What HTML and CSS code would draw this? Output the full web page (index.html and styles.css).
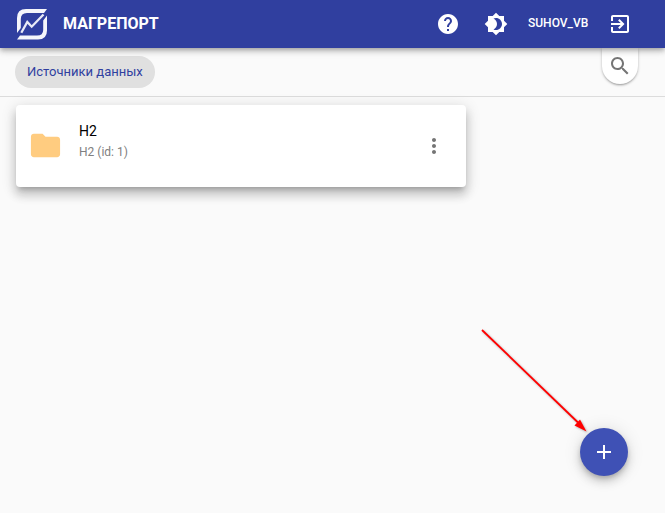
FILE: index.html
```html
<!DOCTYPE html>
<html lang="ru">
<head>
<meta charset="utf-8">
<title>Магрепорт</title>
<link rel="stylesheet" href="styles.css">
</head>
<body>
<header class="appbar">
  <svg class="logo" viewBox="0 0 32 32">
    <path class="frame" d="M31 1H10Q1 1 1 10V25L4.800 20V11Q4.800 5 11 5H28Z"/>
    <path class="frame" d="M1 31.500H22Q31 31.500 31 22.500V7.500L27.200 12.500V22Q27.200 27.500 21 27.500H4Z"/>
    <path class="trend" d="M5.300 24.700L11.300 14L15.700 18.700L27.500 6.500"/>
  </svg>
  <h1 class="brand">МАГРЕПОРТ</h1>
  <nav class="actions">
    <svg class="icon" viewBox="0 0 24 24"><path d="M12 2C6.480 2 2 6.480 2 12s4.480 10 10 10 10-4.480 10-10S17.520 2 12 2zm1 17h-2v-2h2v2zm2.070-7.750l-.9.920C13.450 12.900 13 13.500 13 15h-2v-.5c0-1.100.45-2.100 1.170-2.830l1.240-1.260c.37-.36.59-.86.59-1.410 0-1.100-.9-2-2-2s-2 .9-2 2H8c0-2.210 1.790-4 4-4s4 1.790 4 4c0 .88-.36 1.680-.93 2.250z"/></svg>
    <svg class="icon" viewBox="0 0 24 24"><path d="M20 8.690V4h-4.690L12 .69 8.690 4H4v4.690L.69 12 4 15.310V20h4.690L12 23.310 15.310 20H20v-4.690L23.310 12 20 8.690zM12 18c-.89 0-1.740-.2-2.500-.55C11.560 16.500 13 14.420 13 12s-1.440-4.500-3.500-5.450C10.260 6.200 11.110 6 12 6c3.310 0 6 2.690 6 6s-2.690 6-6 6z"/></svg>
    <span class="user">SUHOV_VB</span>
    <svg class="icon" viewBox="0 0 24 24"><path d="M10.090 15.590L11.500 17l5-5-5-5-1.410 1.410L12.670 11H3v2h9.670l-2.580 2.590zM19 3H5c-1.110 0-2 .9-2 2v4h2V5h14v14H5v-4H3v4c0 1.100.89 2 2 2h14c1.100 0 2-.9 2-2V5c0-1.100-.9-2-2-2z"/></svg>
  </nav>
</header>
<div class="toolbar">
  <span class="chip">Источники данных</span>
  <div class="search">
    <svg class="icon" viewBox="0 0 24 24"><path d="M15.500 14h-.79l-.28-.27C15.410 12.590 16 11.110 16 9.500 16 5.910 13.090 3 9.500 3S3 5.910 3 9.500 5.910 16 9.500 16c1.610 0 3.090-.59 4.230-1.570l.27.28v.79l5 4.990L20.490 19l-4.990-5zm-6 0C7.010 14 5 11.990 5 9.500S7.010 5 9.500 5 14 7.010 14 9.500 11.990 14 9.500 14z"/></svg>
  </div>
</div>
<main class="content">
  <article class="card">
    <svg class="folder" viewBox="0 0 24 24"><path d="M10 4H4c-1.100 0-1.990.9-1.990 2L2 18c0 1.100.9 2 2 2h16c1.100 0 2-.9 2-2V8c0-1.100-.9-2-2-2h-8l-2-2z"/></svg>
    <div class="info">
      <div class="name">H2</div>
      <div class="details">H2 (id: 1)</div>
    </div>
    <svg class="icon more" viewBox="0 0 24 24"><path d="M12 8c1.100 0 2-.9 2-2s-.9-2-2-2-2 .9-2 2 .9 2 2 2zm0 2c-1.100 0-2 .9-2 2s.9 2 2 2 2-.9 2-2-.9-2-2-2zm0 6c-1.100 0-2 .9-2 2s.9 2 2 2 2-.9 2-2-.9-2-2-2z"/></svg>
  </article>
</main>
<button class="fab" aria-label="Добавить"><svg class="icon" viewBox="0 0 24 24"><path d="M19 13h-6v6h-2v-6H5v-2h6V5h2v6h6v2z"/></svg></button>
<svg class="pointer" viewBox="0 0 120 120">
  <path class="stem" d="M12 10L108 102.500"/>
  <path class="head" d="M104.500 105.500L110 99.500L116.500 111.500Z"/>
</svg>
</body>
</html>
```
FILE: styles.css
```css
* { box-sizing: border-box; }
body {
  margin: 0;
  height: 513px;
  overflow: hidden;
  background: #fafafa;
  font-family: Roboto, "Liberation Sans", sans-serif;
}
svg { display: block; flex: none; }
.icon { width: 24px; height: 24px; fill: currentColor; }
.appbar {
  position: relative;
  z-index: 2;
  display: flex;
  align-items: center;
  height: 48px;
  padding: 0 33px 0 16px;
  background: #303f9f;
  color: #fff;
  box-shadow: 0 2px 4px -1px rgba(0,0,0,.2), 0 4px 5px rgba(0,0,0,.14), 0 1px 10px rgba(0,0,0,.12);
}
.logo { width: 32px; height: 32px; }
.frame { fill: #f5f6fb; }
.trend { fill: none; stroke: #e8eaf6; stroke-width: 2.3; }
.brand { margin: 0 0 1px 15px; font-size: 16px; line-height: 24px; font-weight: 700; }
.actions { display: flex; align-items: center; margin-left: auto; }
.actions .icon + .icon { margin-left: 24px; }
.user { width: 60px; margin: 0 20px 3px; font-size: 12px; line-height: 18px; font-weight: 500; white-space: nowrap; }
.toolbar {
  display: flex;
  justify-content: space-between;
  height: 49px;
  padding: 0 27px 0 15px;
  border-bottom: 1px solid #dcdcdc;
}
.chip {
  height: 32px;
  margin-top: 8px;
  padding: 0 12px;
  border-radius: 16px;
  background: #e0e0e0;
  color: #303f9f;
  font-size: 13px;
  line-height: 32px;
}
.search {
  width: 36px;
  height: 36px;
  padding: 6px;
  border-radius: 0 0 18px 18px;
  background: #fff;
  color: #757575;
  box-shadow: 0 2px 2px -1px rgba(0,0,0,.2), 0 1px 3px rgba(0,0,0,.25);
}
.content { padding: 8px 16px; }
.card {
  display: flex;
  align-items: center;
  width: 450px;
  height: 82px;
  padding: 0 20px 0 12px;
  border-radius: 4px;
  background: #fff;
  box-shadow: 0 5px 5px -3px rgba(0,0,0,.2), 0 8px 10px 1px rgba(0,0,0,.14), 0 3px 14px 2px rgba(0,0,0,.12);
}
.folder { width: 35px; height: 35px; margin-bottom: 1px; fill: #ffcc80; }
.info { margin: 0 auto 9px 16px; }
.name { color: #000; font-size: 14px; line-height: 21px; }
.details { color: #808080; font-size: 12px; line-height: 20px; }
.more { color: #757575; }
.fab {
  position: absolute;
  left: 580px;
  top: 428px;
  width: 48px;
  height: 48px;
  padding: 12px;
  border: 0;
  border-radius: 50%;
  background: #3f51b5;
  color: #fff;
  box-shadow: 0 3px 5px -1px rgba(0,0,0,.2), 0 6px 10px rgba(0,0,0,.14), 0 1px 18px rgba(0,0,0,.12);
}
.pointer { position: absolute; left: 470px; top: 320px; width: 120px; height: 120px; filter: drop-shadow(1px 1px 1px rgba(0,0,0,.3)); }
.stem { fill: none; stroke: #f00; stroke-width: 1.8; }
.head { fill: #f00; }
```
